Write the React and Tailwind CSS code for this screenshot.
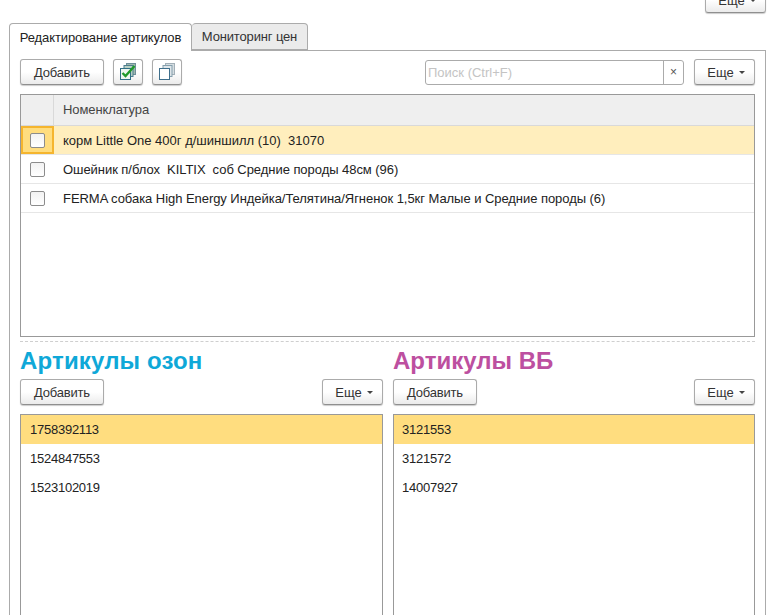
const Btn = ({ children, className = "" }) => (
  <button className={"h-[26px] shrink-0 flex items-center justify-center rounded-[3px] border border-[#ababab] border-b-[#8f8f8f] bg-gradient-to-b from-white from-50% to-[#ebebeb] text-[#333] shadow-[0_1px_1px_rgba(0,0,0,0.2)] " + className}>
    {children}
  </button>
);

const More = ({ className = "" }) => (
  <Btn className={"w-[61px] gap-[5px] pl-[3px] " + className}>
    <span>Еще</span>
    <span className="mt-[1px] w-0 h-0 border-l-[3px] border-r-[3px] border-t-[3px] border-l-transparent border-r-transparent border-t-[#444]" />
  </Btn>
);

const Add = () => <Btn className="w-[84px] tracking-[-0.2px]">Добавить</Btn>;

const CheckStack = () => (
  <svg width="20" height="20" viewBox="0 0 20 20" fill="none">
    <rect x="8.5" y="1.5" width="9" height="11" fill="#9fb8ae" stroke="#6f8f9a" />
    <rect x="6" y="3.5" width="9" height="11" fill="#b9d0c4" stroke="#4d7f8f" />
    <rect x="2.5" y="6.5" width="10" height="11" fill="#eef6f0" stroke="#2f6f86" />
    <path d="M4.5 11 L7.5 14 L16.5 4" stroke="#1f9a2a" strokeWidth="2.4" />
  </svg>
);

const Stack = () => (
  <svg width="20" height="20" viewBox="0 0 20 20" fill="none">
    <rect x="8.5" y="1.5" width="9" height="11" fill="#d5dde1" stroke="#a3b0b8" />
    <rect x="6" y="3.5" width="9" height="11" fill="#dfe6ea" stroke="#85a0ae" />
    <rect x="2.5" y="6.5" width="10" height="11" fill="#fff" stroke="#3f6f8c" />
  </svg>
);

const Checkbox = () => (
  <span className="block w-[15px] h-[15px] rounded-[2px] border border-[#8c8c8c] bg-gradient-to-b from-[#f2f2f2] to-white" />
);

const rows = [
  { text: "корм Little One 400г д/шиншилл (10)  31070", cls: "tracking-[0px]" },
  { text: "Ошейник п/блох  KILTIX  соб Средние породы 48см (96)", cls: "tracking-[-0.05px]" },
  { text: "FERMA собака High Energy Индейка/Телятина/Ягненок 1,5кг Малые и Средние породы (6)", cls: "tracking-[-0.05px]" },
];

const Column = ({ title, color, items, width, inset }) => (
  <div className={"flex flex-col " + width}>
    <div className={"h-[30px] flex items-center font-bold text-[24px] leading-none " + color}>{title}</div>
    <div className="flex justify-between mt-[3px]">
      <Add />
      <More />
    </div>
    <div className="mt-[9px] border border-[#999] h-[300px]">
      {items.map((t, i) => (
        <div key={t} className={"h-[29px] flex items-center tracking-[-0.25px] text-[#222] " + inset + " " + (i === 0 ? "bg-[#ffdd7f]" : "")}>{t}</div>
      ))}
    </div>
  </div>
);

export default function App() {
  return (
    <div className="relative w-[769px] h-[615px] overflow-hidden bg-white text-[13px] leading-none font-['Liberation_Sans',Arial,sans-serif]">
      <div className="flex justify-end pr-[3px] h-[23px]">
        <More className="-mt-[13px]" />
      </div>

      <div className="flex pl-[9px] h-[28px] items-start">
        <div className="relative z-10 w-[183px] h-[28px] flex items-center justify-center pb-[1px] bg-white border border-b-0 border-[#ababab] rounded-t-[4px] text-[#222] tracking-[-0.1px]">
          Редактирование артикулов
        </div>
        <div className="w-[116px] h-[27px] flex items-center justify-center bg-[#ebebeb] border border-l-0 border-[#ababab] rounded-t-[4px] text-[#333] tracking-[-0.15px]">
          Мониторинг цен
        </div>
      </div>

      <div className="-mt-[1px] ml-[9px] w-[757px] h-[600px] border border-[#ababab] px-[10px] pt-[8px]">
        <div className="flex items-center h-[26px]">
          <Add />
          <Btn className="ml-[9px] w-[30px]"><CheckStack /></Btn>
          <Btn className="ml-[9px] w-[30px]"><Stack /></Btn>
          <div className="ml-auto flex h-[25px] w-[259px] border border-[#ababab] rounded-[3px]">
            <div className="flex-1 flex items-center pl-[2px] text-[#c4c4c4]">Поиск (Ctrl+F)</div>
            <div className="w-[20px] border-l border-[#ababab] flex items-center justify-center text-[#555] text-[12px]">×</div>
          </div>
          <More className="ml-[10px]" />
        </div>

        <div className="mt-[9px] h-[243px] border border-[#999]">
          <div className="flex h-[30px] bg-[#efefef] border-b border-[#d9d9d9] box-content">
            <div className="w-[33px] border-r border-[#d9d9d9]" />
            <div className="flex-1 flex items-center pl-[9px] pb-[2px] text-[#444] tracking-[-0.1px]">Номенклатура</div>
          </div>
          {rows.map((r, i) => (
            <div key={r.text} className={"flex h-[29px] border-b border-[#e6e6e6] " + (i === 0 ? "bg-[#ffeebd]" : "")}>
              <div className={"w-[33px] flex items-center justify-center " + (i === 0 ? "bg-[#ffdd7f] border-2 border-[#f5b52e]" : "")}>
                <Checkbox />
              </div>
              <div className={"flex-1 flex items-center pl-[9px] text-[#222] whitespace-pre " + r.cls}>{r.text}</div>
            </div>
          ))}
        </div>

        <div className="mt-[4px] border-t border-dashed border-[#cfcfcf]" />

        <div className="flex justify-between mt-[4px]">
          <Column title="Артикулы озон" color="text-[#0fa8d8] tracking-[0.15px]" width="w-[363px]" inset="pl-[9px]" items={["1758392113", "1524847553", "1523102019"]} />
          <Column title="Артикулы ВБ" color="text-[#bd4fa0]" width="w-[362px]" inset="pl-[8px]" items={["3121553", "3121572", "14007927"]} />
        </div>
      </div>
    </div>
  );
}
